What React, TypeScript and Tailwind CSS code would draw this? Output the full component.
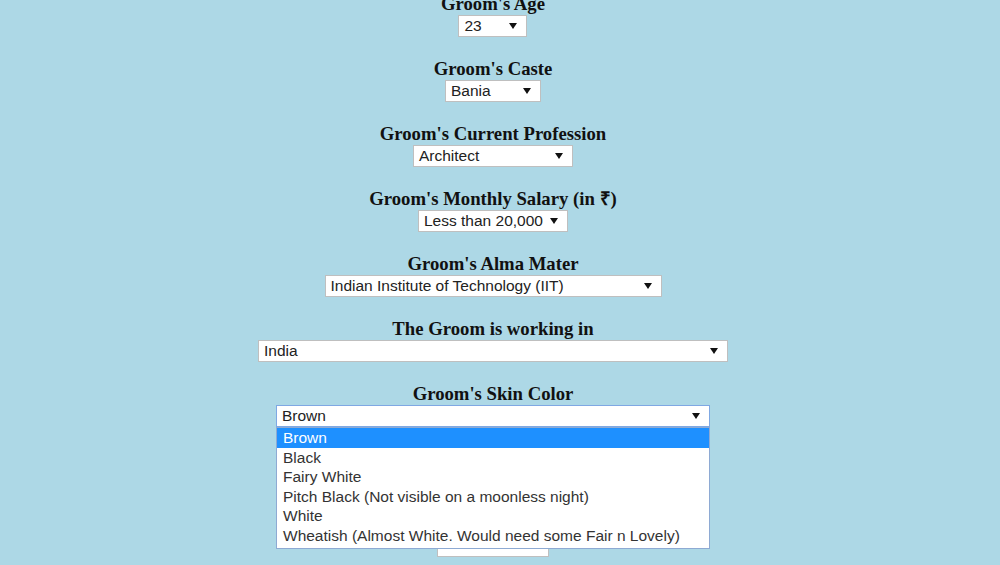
import React from "react";

type Block = { label: React.ReactNode; value: string; width: number; focused?: boolean; hidden?: boolean };

const Arrow = () => (
  <svg width="8" height="6" viewBox="0 0 8 6" className="absolute right-[9px] top-[7px]">
    <polygon points="0,0 8,0 4,6" fill="#111" />
  </svg>
);

const options = [
  "Brown",
  "Black",
  "Fairy White",
  "Pitch Black (Not visible on a moonless night)",
  "White",
  "Wheatish (Almost White. Would need some Fair n Lovely)",
];

export default function App() {
  const blocks: Block[] = [
    { label: "Groom's Age", value: "23", width: 69 },
    { label: "Groom's Caste", value: "Bania", width: 96 },
    { label: "Groom's Current Profession", value: "Architect", width: 160 },
    { label: "Groom's Monthly Salary (in ₹)", value: "Less than 20,000", width: 150 },
    { label: "Groom's Alma Mater", value: "Indian Institute of Technology (IIT)", width: 337 },
    { label: "The Groom is working in", value: "India", width: 470 },
    { label: "Groom's Skin Color", value: "Brown", width: 434, focused: true },
    { label: "", value: "", width: 0, hidden: true },
    { label: "", value: "", width: 112 },
  ];
  return (
    <div className="h-[565px] w-[1000px] overflow-hidden bg-[#add8e6]">
      <div className="mt-[-8px] flex w-[986px] flex-col items-center">
        {blocks.map((b, i) => (
          <div key={i} className="mb-[20px] flex flex-col items-center">
            <div
              className="h-[23px] text-[18.72px] font-bold leading-[23px] text-[#111]"
              style={{ fontFamily: '"Liberation Serif", "Times New Roman", serif' }}
            >
              {b.label}
            </div>
            {b.hidden ? (
              <div className="h-[22px]" />
            ) : (
              <div
                className={`relative h-[22px] bg-white ${
                  b.focused ? "z-10 border border-[#7fa8e3]" : "border border-[#bfbfbf]"
                }`}
                style={{ width: b.width }}
              >
                <div
                  className="pl-[5px] text-[15.5px] leading-[20px] text-[#222] whitespace-nowrap"
                  style={{ fontFamily: '"Liberation Sans", Arial, sans-serif' }}
                >
                  {b.value}
                </div>
                {b.value && <Arrow />}
                {b.focused && (
                  <div
                    className="absolute left-[-1px] top-[21px] w-[434px] border border-[#8eaad3] bg-white pb-[2px]"
                    style={{ fontFamily: '"Liberation Sans", Arial, sans-serif' }}
                  >
                    {options.map((o, j) => (
                      <div
                        key={j}
                        className={`h-[19.6px] pl-[6px] text-[15.5px] leading-[19px] whitespace-nowrap ${
                          j === 0 ? "bg-[#1e90ff] text-white" : "text-[#333]"
                        }`}
                      >
                        {o}
                      </div>
                    ))}
                  </div>
                )}
              </div>
            )}
          </div>
        ))}
      </div>
    </div>
  );
}
